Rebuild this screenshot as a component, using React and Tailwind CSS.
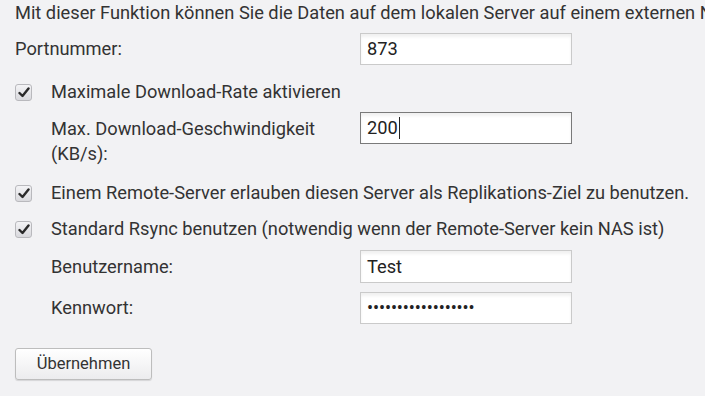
import React from 'react'

const Check = () => (
  <div className="w-[17px] h-[17px] shrink-0 rounded-[3px] border border-[#b9b9bd] bg-gradient-to-b from-[#f4f4f6] to-[#d9d9dd] flex items-center justify-center">
    <svg width="12" height="11" viewBox="0 0 12 11">
      <path d="M1.5 6 L4.5 9 L10.5 1.5" fill="none" stroke="#2a2a2a" strokeWidth="2.4" strokeLinecap="round" strokeLinejoin="round" />
    </svg>
  </div>
)

const Field = ({ value, focused, password, className = '' }) => (
  <div
    className={`w-[212px] h-[32px] bg-white flex items-center pl-[6px] shadow-[inset_0_3px_3px_rgba(0,0,0,0.06)] border ${
      focused ? 'border-[#7a7a7a]' : 'border-[#cacaca]'
    } ${className}`}
  >
    {password ? (
      <span className="text-[#222] text-[18px] tracking-[-0.1px] leading-none">••••••••••••••••••</span>
    ) : (
      <span className="text-[#222]">{value}</span>
    )}
    {focused && <span className="w-px h-[22px] bg-[#222] ml-[1px]" />}
  </div>
)

const CheckRow = ({ children, className = '' }) => (
  <div className={`flex items-center h-[20px] ${className}`}>
    <Check />
    <span className="ml-[19px] whitespace-nowrap">{children}</span>
  </div>
)

export default function App() {
  return (
    <div className="w-[705px] h-[396px] overflow-hidden bg-[#f2f2f4] text-[#333] text-[18.25px] leading-[20px] pl-[15px] pt-[3px] font-['Roboto',sans-serif]">
      <p className="whitespace-nowrap">
        Mit dieser Funktion können Sie die Daten auf dem lokalen Server auf einem externen NAS sichern.
      </p>

      <div className="flex items-center mt-[10px]">
        <span className="w-[345px]">Portnummer:</span>
        <Field value="873" />
      </div>

      <CheckRow className="mt-[17px]">Maximale Download-Rate aktivieren</CheckRow>

      <div className="flex items-start mt-[10px] pl-[36px]">
        <span className="w-[309px] leading-[25px] mt-[4px]">
          Max. Download-Geschwindigkeit
          <br />
          (KB/s):
        </span>
        <Field value="200" focused />
      </div>

      <CheckRow className="mt-[17px]">
        Einem Remote-Server erlauben diesen Server als Replikations-Ziel zu benutzen.
      </CheckRow>
      <CheckRow className="mt-[16px]">
        Standard Rsync benutzen (notwendig wenn der Remote-Server kein NAS ist)
      </CheckRow>

      <div className="flex items-center mt-[11px] pl-[36px]">
        <span className="w-[309px]">Benutzername:</span>
        <Field value="Test" className="h-[33px]" />
      </div>
      <div className="flex items-center mt-[9px] pl-[36px]">
        <span className="w-[309px]">Kennwort:</span>
        <Field password />
      </div>

      <button className="mt-[24px] w-[137px] h-[32px] rounded-[3px] border border-[#bdbdbd] bg-gradient-to-b from-white to-[#ececee] shadow-[0_1px_1px_rgba(0,0,0,0.12)] text-[16.5px] text-[#333]">
        Übernehmen
      </button>
    </div>
  )
}
